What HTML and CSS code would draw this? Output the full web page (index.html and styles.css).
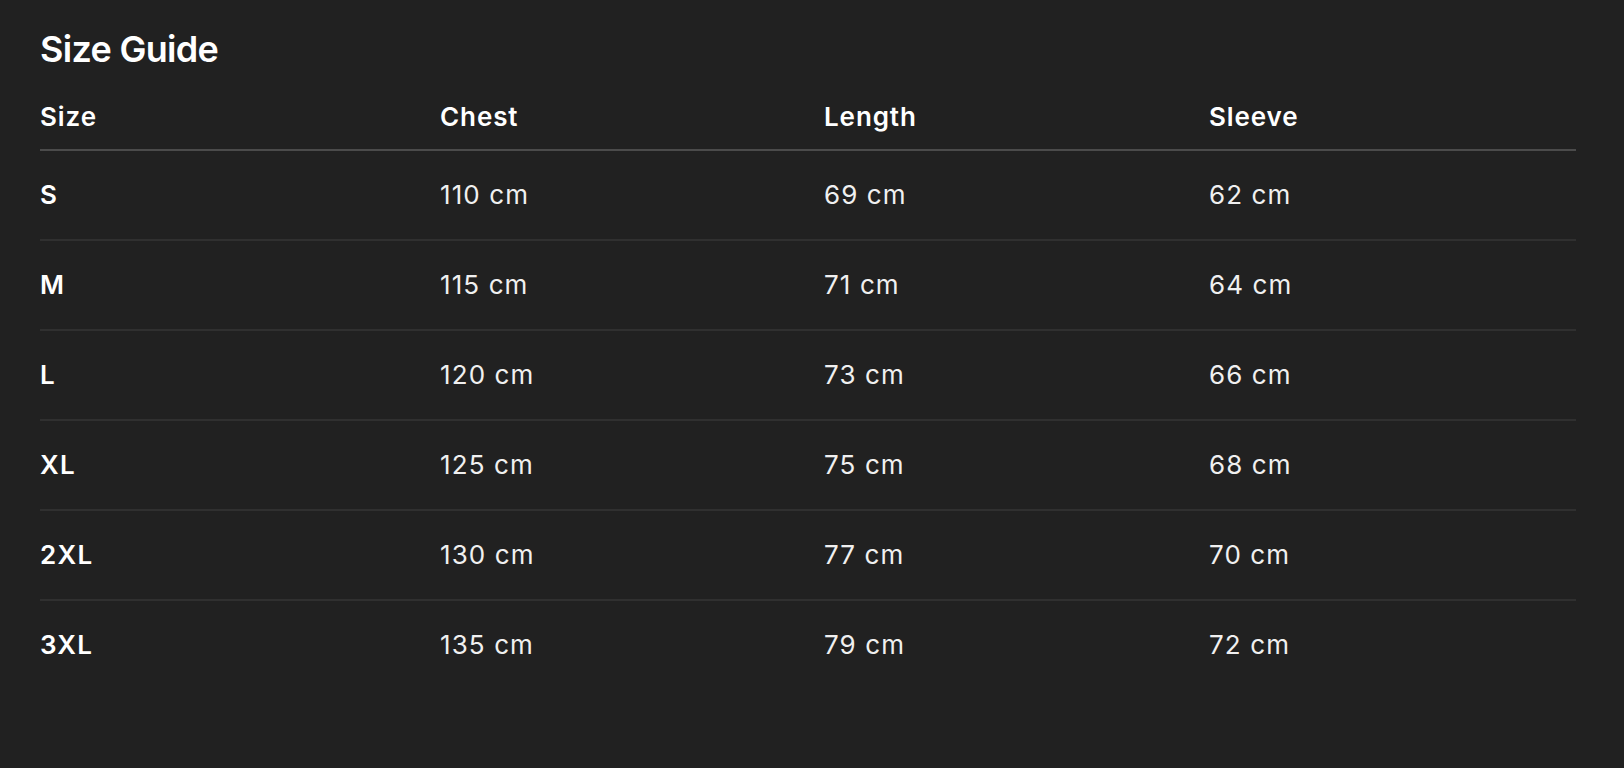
FILE: index.html
```html
<!DOCTYPE html>
<html lang="en">
<head>
<meta charset="utf-8">
<title>Size Guide</title>
<link rel="stylesheet" href="styles.css">
</head>
<body>
<main class="page">
  <h1 class="title">Size Guide</h1>
  <table class="size-table">
    <colgroup>
      <col class="col-size">
      <col class="col-chest">
      <col class="col-length">
      <col class="col-sleeve">
    </colgroup>
    <thead>
      <tr><th>Size</th><th>Chest</th><th>Length</th><th>Sleeve</th></tr>
    </thead>
    <tbody>
      <tr><td class="size">S</td><td>110 cm</td><td>69 cm</td><td>62 cm</td></tr>
      <tr><td class="size">M</td><td>115 cm</td><td>71 cm</td><td>64 cm</td></tr>
      <tr><td class="size">L</td><td>120 cm</td><td>73 cm</td><td>66 cm</td></tr>
      <tr><td class="size">XL</td><td>125 cm</td><td>75 cm</td><td>68 cm</td></tr>
      <tr><td class="size">2XL</td><td>130 cm</td><td>77 cm</td><td>70 cm</td></tr>
      <tr><td class="size">3XL</td><td>135 cm</td><td>79 cm</td><td>72 cm</td></tr>
    </tbody>
  </table>
</main>
</body>
</html>
```

FILE: styles.css
```css
html, body {
  margin: 0;
  padding: 0;
  background: #212121;
  height: 100%;
}

body {
  font-family: Inter, "Noto Sans", "Liberation Sans", sans-serif;
  color: #f4f4f4;
}

.page {
  padding: 27px 48px 0 40px;
}

.title {
  margin: 0;
  font-size: 36px;
  line-height: 44px;
  font-weight: 600;
  color: #ffffff;
  letter-spacing: -0.7px;
}

.size-table {
  width: 1536px;
  margin-top: 28px;
  border-collapse: collapse;
  table-layout: fixed;
}

.col-size { width: 400px; }
.col-chest { width: 384px; }
.col-length { width: 385px; }
.col-sleeve { width: 367px; }

.size-table th,
.size-table td {
  padding: 0;
  text-align: left;
  font-size: 26px;
  line-height: 36px;
  vertical-align: middle;
}

.size-table th {
  font-weight: 600;
  color: #ffffff;
  letter-spacing: 0.9px;
  padding-bottom: 14px;
  border-bottom: 2px solid #4b4b4b;
}

.size-table td {
  font-weight: 400;
  color: #f0f0f0;
  letter-spacing: 1.1px;
  padding-top: 26px;
  padding-bottom: 26px;
  border-bottom: 2px solid #303030;
}

.size-table td.size {
  font-weight: 600;
  color: #ffffff;
  letter-spacing: 1.3px;
}

.size-table tbody tr:last-child td {
  border-bottom: none;
}
```
